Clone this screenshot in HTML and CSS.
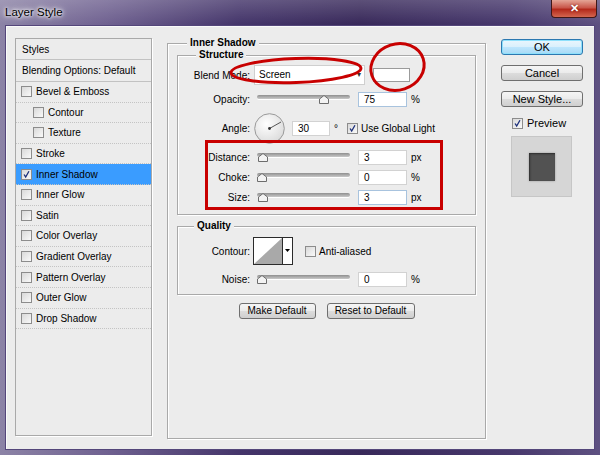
FILE: index.html
```html
<!DOCTYPE html>
<html lang="en">
<head>
    <meta charset="UTF-8">
    <title>Layer Style</title>
    <link rel="stylesheet" href="styles.css">
</head>
<body>
<div class="window">
    <div class="titlebar">
        <span class="title">Layer Style</span>
        <span class="close">&#x2715;</span>
    </div>

    <div class="dialog">
        <ul class="styles-list">
            <li class="head">Styles</li>
            <li class="head">Blending Options: Default</li>
            <li><span class="cb"></span>Bevel &amp; Emboss</li>
            <li class="sub"><span class="cb"></span>Contour</li>
            <li class="sub"><span class="cb"></span>Texture</li>
            <li><span class="cb"></span>Stroke</li>
            <li class="active"><span class="cb on"><svg viewBox="0 0 11 11"><path d="M2.5 5.5 L4.5 8.5 L8.5 1.5"/></svg></span>Inner Shadow</li>
            <li><span class="cb"></span>Inner Glow</li>
            <li><span class="cb"></span>Satin</li>
            <li><span class="cb"></span>Color Overlay</li>
            <li><span class="cb"></span>Gradient Overlay</li>
            <li><span class="cb"></span>Pattern Overlay</li>
            <li><span class="cb"></span>Outer Glow</li>
            <li><span class="cb"></span>Drop Shadow</li>
        </ul>

        <div class="main">
            <fieldset class="group outer">
                <legend class="legend-outer">Inner Shadow</legend>

                <fieldset class="group structure">
                    <legend class="legend-structure">Structure</legend>

                    <div class="row row-blend">
                        <label class="lbl">Blend Mode:</label>
                        <div class="select">Screen<span class="arrow">&#9662;</span></div>
                        <div class="swatch"></div>
                    </div>

                    <div class="row row-opacity">
                        <label class="lbl">Opacity:</label>
                        <div class="slider"><div class="track"></div><svg class="thumb" style="--v: 75" viewBox="0 0 10 9"><path d="M0.5 8.5 V4 L5 0.5 L9.5 4 V8.5 Z"/></svg></div>
                        <div class="field focus">75</div>
                        <span class="unit">%</span>
                    </div>

                    <div class="row row-angle">
                        <label class="lbl">Angle:</label>
                        <svg class="dial" viewBox="0 0 31 31">
                            <defs>
                                <radialGradient id="dialFill" cx="0.4" cy="0.35" r="0.7">
                                    <stop offset="0" stop-color="#ffffff"/>
                                    <stop offset="1" stop-color="#dadada"/>
                                </radialGradient>
                            </defs>
                            <circle cx="15.5" cy="15.5" r="14.8" fill="url(#dialFill)" stroke="#9a9a9a"/>
                            <line x1="15.5" y1="15.5" x2="27" y2="9" stroke="#555" stroke-width="1"/>
                            <circle cx="15.5" cy="15.5" r="1.4" fill="#333"/>
                        </svg>
                        <div class="field field-angle">30</div>
                        <span class="unit">&deg;</span>
                        <span class="cb on cb-global"><svg viewBox="0 0 11 11"><path d="M2.5 5.5 L4.5 8.5 L8.5 1.5"/></svg></span>
                        <span class="cb-text">Use Global Light</span>
                    </div>

                    <div class="row row-distance">
                        <label class="lbl">Distance:</label>
                        <div class="slider"><div class="track"></div><svg class="thumb" style="--v: 1.2" viewBox="0 0 10 9"><path d="M0.5 8.5 V4 L5 0.5 L9.5 4 V8.5 Z"/></svg></div>
                        <div class="field">3</div>
                        <span class="unit">px</span>
                    </div>

                    <div class="row row-tight">
                        <label class="lbl">Choke:</label>
                        <div class="slider"><div class="track"></div><svg class="thumb" style="--v: 0" viewBox="0 0 10 9"><path d="M0.5 8.5 V4 L5 0.5 L9.5 4 V8.5 Z"/></svg></div>
                        <div class="field">0</div>
                        <span class="unit">%</span>
                    </div>

                    <div class="row row-tight">
                        <label class="lbl">Size:</label>
                        <div class="slider"><div class="track"></div><svg class="thumb" style="--v: 1.2" viewBox="0 0 10 9"><path d="M0.5 8.5 V4 L5 0.5 L9.5 4 V8.5 Z"/></svg></div>
                        <div class="field focus">3</div>
                        <span class="unit">px</span>
                    </div>
                </fieldset>

                <fieldset class="group quality">
                    <legend class="legend-quality">Quality</legend>

                    <div class="row row-contour">
                        <label class="lbl">Contour:</label>
                        <svg class="contour" viewBox="0 0 40 28">
                            <rect x="0.5" y="0.5" width="39" height="27" fill="#fff" stroke="#2b2b2b"/>
                            <path d="M1 27 L29 1 V27 Z" fill="#a9a9a9"/>
                            <line x1="29.5" y1="1" x2="29.5" y2="27" stroke="#2b2b2b"/>
                            <path d="M32 12 H37 L34.5 15 Z" fill="#000"/>
                        </svg>
                        <span class="cb cb-anti"></span>
                        <span class="cb-text">Anti-aliased</span>
                    </div>

                    <div class="row row-noise">
                        <label class="lbl">Noise:</label>
                        <div class="slider"><div class="track"></div><svg class="thumb" style="--v: 0" viewBox="0 0 10 9"><path d="M0.5 8.5 V4 L5 0.5 L9.5 4 V8.5 Z"/></svg></div>
                        <div class="field">0</div>
                        <span class="unit">%</span>
                    </div>
                </fieldset>

                <div class="defaults">
                    <button class="btn btn-make">Make Default</button>
                    <button class="btn btn-reset">Reset to Default</button>
                </div>
            </fieldset>
        </div>

        <div class="actions">
            <button class="btn btn-side btn-ok">OK</button>
            <button class="btn btn-side">Cancel</button>
            <button class="btn btn-side">New Style...</button>
            <div class="preview-toggle">
                <span class="cb on"><svg viewBox="0 0 11 11"><path d="M2.5 5.5 L4.5 8.5 L8.5 1.5"/></svg></span>
                <span class="preview-text">Preview</span>
            </div>
            <div class="preview-box"><div class="preview-swatch"></div></div>
        </div>
    </div>

    <svg class="marks" viewBox="0 0 600 455">
        <ellipse cx="296" cy="70.5" rx="65" ry="12" transform="rotate(-2 296 70.5)"/>
        <ellipse cx="397.5" cy="67" rx="27" ry="23" transform="rotate(-18 397.5 67)"/>
        <rect x="206.5" y="141.5" width="235" height="67"/>
    </svg>
</div>
</body>
</html>
```

FILE: styles.css
```css
body {
    margin: 0;
    font-family: "Liberation Sans", Arial, sans-serif;
    font-size: 10px;
    color: #000;
}
.window {
    position: relative;
    width: 600px;
    height: 455px;
    overflow: hidden;
    background:
        linear-gradient(180deg, rgba(255, 255, 255, 0.18), rgba(255, 255, 255, 0) 24px),
        linear-gradient(90deg, #8c83a6 0%, #6f6190 18%, #44356a 40%, #38295a 60%, #47386c 85%, #5e5181 100%);
}
.titlebar {
    height: 25px;
    display: flex;
    justify-content: space-between;
    align-items: flex-start;
}
.title {
    padding: 6px 0 0 5px;
    font-size: 11.5px;
    text-shadow: 0 0 5px #fff, 0 0 3px #fff, 0 0 8px rgba(255, 255, 255, 0.8);
}
.close {
    width: 46px;
    height: 18px;
    margin-right: 3px;
    box-sizing: border-box;
    border: 1px solid #3f1717;
    border-top: none;
    border-radius: 0 0 4px 4px;
    background: linear-gradient(#e4a596, #c9574a 45%, #b3291b 55%, #d4664f);
    color: #fff;
    font-weight: bold;
    font-size: 11px;
    text-align: center;
    line-height: 16px;
    text-shadow: 0 0 2px #600;
}
.dialog {
    height: 425px;
    margin: 0 5px;
    box-sizing: border-box;
    border: 1px solid #54467a;
    box-shadow: inset 1px 1px 0 #fafafa;
    background-color: #ececec;
    padding: 12px 9px;
    display: flex;
    gap: 15px;
    align-items: flex-start;
}

/* styles list */
.styles-list {
    list-style: none;
    margin: 0;
    padding: 0;
    width: 137px;
    height: 398px;
    box-sizing: border-box;
    border: 1px solid #a9a9a9;
    box-shadow: 1px 1px 0 #fff;
}
.styles-list li {
    height: 20.6px;
    box-sizing: border-box;
    display: flex;
    align-items: center;
    padding-left: 5px;
    border-bottom: 1px dotted #c4c4c4;
    white-space: nowrap;
}
.styles-list li.head {
    height: 22px;
    padding-left: 6px;
    border-bottom: 1px solid #c2c2c2;
}
.styles-list li:first-child {
    height: 21px;
}
.styles-list li.sub {
    padding-left: 17px;
}
.styles-list li.active {
    background-color: #3a9cff;
}
.styles-list .cb {
    margin-right: 4px;
}

/* checkbox */
.cb {
    display: inline-block;
    flex: none;
    width: 11px;
    height: 11px;
    box-sizing: border-box;
    border: 1px solid #8c8c8c;
    background: linear-gradient(135deg, #d9d9d9, #f9f9f9);
}
.cb svg {
    display: block;
    width: 9px;
    height: 9px;
    fill: none;
    stroke: #1c2f7a;
    stroke-width: 1.6;
}
.cb-text {
    margin-left: 3px;
}

/* group boxes */
.main {
    margin-top: -1px;
}
.group {
    margin: 0;
    border: 1px solid #a9a9a9;
    box-shadow: 1px 1px 0 #fff, inset 1px 1px 0 #fff;
    min-width: 0;
}
.group legend {
    font-weight: bold;
    line-height: 12px;
    padding: 0 3px;
    background-color: #ececec;
}
.outer {
    width: 319px;
    height: 402px;
    box-sizing: border-box;
    padding: 0 9px;
}
.legend-outer {
    margin-left: 10px;
}
.structure {
    padding: 4px 9px 9px;
}
.legend-structure {
    margin-left: 9px;
}
.quality {
    margin-top: 5px;
    padding: 5px 9px 7px;
}
.legend-quality {
    margin-left: 7px;
}

/* rows */
.row {
    display: flex;
    align-items: center;
    height: 16px;
}
.lbl {
    width: 63px;
    margin-right: 4px;
    text-align: right;
    flex: none;
}
.row-blend {
    height: 20px;
}
.row-opacity {
    margin-top: 6px;
}
.row-angle {
    height: 32px;
    margin-top: 5px;
}
.row-distance {
    margin-top: 5px;
}
.row-tight {
    margin-top: 4px;
}
.row-contour {
    height: 28px;
}
.row-noise {
    margin-top: 6px;
}

.select {
    position: relative;
    width: 111px;
    height: 20px;
    box-sizing: border-box;
    border: 1px solid #cfcfcf;
    background-color: #fff;
    padding-left: 4px;
    line-height: 18px;
}
.select .arrow {
    position: absolute;
    right: 3px;
    top: 0;
    font-size: 8px;
    color: #333;
}
.swatch {
    width: 37px;
    height: 14px;
    margin-left: 8px;
    box-sizing: border-box;
    border: 1px solid #9b9b9b;
    background-color: #fff;
}

.slider {
    position: relative;
    width: 93px;
    height: 16px;
    margin-left: 3px;
}
.track {
    position: absolute;
    left: 0;
    right: 0;
    top: 4px;
    height: 4px;
    border-radius: 2px;
    background: linear-gradient(#8f8f8f, #c9c9c9);
    box-shadow: 0 1px 0 #fff;
}
.thumb {
    position: absolute;
    top: 4px;
    left: calc((100% - 10px) * var(--v) / 100);
    width: 10px;
    height: 9px;
    fill: #f3f3f3;
    stroke: #6d6d6d;
    stroke-width: 1;
}

.field {
    width: 49px;
    height: 15px;
    margin-left: 8px;
    box-sizing: border-box;
    border: 1px solid #d2d2d2;
    background-color: #fff;
    padding-left: 5px;
    line-height: 13px;
}
.field.focus {
    border-color: #a8c3de;
}
.field-angle {
    width: 38px;
    margin-left: 7px;
}
.unit {
    margin-left: 4px;
}
.dial {
    width: 31px;
    height: 31px;
    flex: none;
}
.cb-global {
    margin-left: 9px;
}
.contour {
    width: 40px;
    height: 28px;
    flex: none;
    margin-left: -1px;
}
.cb-anti {
    margin-left: 12px;
}

/* buttons */
.btn {
    height: 16px;
    padding: 0;
    box-sizing: border-box;
    border: 1px solid #6f6f6f;
    border-radius: 3px;
    background: linear-gradient(#f5f5f5, #ebebeb 50%, #dcdcdc 51%, #cfcfcf);
    font-family: "Liberation Sans", Arial, sans-serif;
    font-size: 10px;
    color: #000;
    line-height: 14px;
}
.defaults {
    display: flex;
    justify-content: center;
    gap: 11px;
    margin-top: 8px;
}
.btn-make {
    width: 77px;
}
.btn-reset {
    width: 88px;
}

.actions {
    width: 82px;
    margin-top: 1px;
    display: flex;
    flex-direction: column;
}
.btn-side {
    width: 82px;
    font-size: 11px;
}
.btn-side + .btn-side {
    margin-top: 10px;
}
.btn-ok {
    border-color: #2c78b0;
    box-shadow: inset 0 0 0 1px #8ee0fb;
    background: linear-gradient(#eaf6fd, #d9f0fc 50%, #bee6fd 51%, #a7d9f5);
}
.preview-toggle {
    display: flex;
    align-items: center;
    margin-top: 10px;
    padding-left: 11px;
}
.preview-text {
    margin-left: 4px;
    font-size: 11px;
}
.preview-box {
    width: 61px;
    height: 61px;
    margin: 7px 0 0 10px;
    box-sizing: border-box;
    border: 1px solid #c6c6c6;
    background-color: #d6d6d6;
    display: flex;
    align-items: center;
    justify-content: center;
}
.preview-swatch {
    width: 26px;
    height: 28px;
    background-color: #525252;
    box-shadow: inset 1px 1px 2px #2e2e2e, 0 0 2px #9a9a9a;
}

/* red annotations drawn over the dialog */
.marks {
    position: absolute;
    left: 0;
    top: 0;
    width: 600px;
    height: 455px;
    pointer-events: none;
    fill: none;
    stroke: #c80000;
    stroke-width: 3;
}
```
